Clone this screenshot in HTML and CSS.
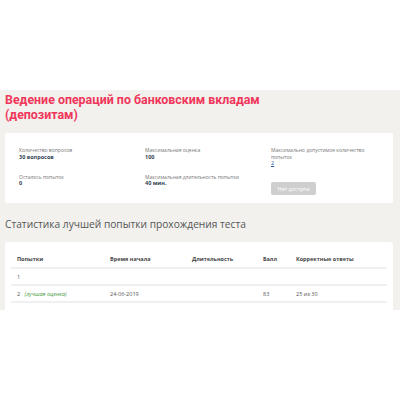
FILE: index.html
```html
<!DOCTYPE html>
<html lang="ru">
<head>
<meta charset="utf-8">
<link rel="stylesheet" href="styles.css">
</head>
<body>
<div class="topbar"></div>
<main class="main">
  <h1 class="title">Ведение операций по банковским вкладам (депозитам)</h1>
  <section class="card info">
    <div class="item"><div class="label">Количество вопросов</div><div class="value">30 вопросов</div></div>
    <div class="item"><div class="label">Максимальная оценка</div><div class="value">100</div></div>
    <div class="item"><div class="label">Максимально допустимое количество попыток</div><div class="value link">2</div></div>
    <div class="item"><div class="label">Осталось попыток</div><div class="value">0</div></div>
    <div class="item"><div class="label">Максимальная длительность попытки</div><div class="value">40 мин.</div></div>
    <div class="item"><span class="btn">Нет доступа</span></div>
  </section>
  <h2 class="subtitle">Статистика лучшей попытки прохождения теста</h2>
  <section class="card stats">
    <table class="table">
      <thead>
        <tr><th class="c1">Попытки</th><th class="c2">Время начала</th><th class="c3">Длительность</th><th class="c4">Балл</th><th>Корректные ответы</th></tr>
      </thead>
      <tbody>
        <tr><td>1</td><td></td><td></td><td></td><td></td></tr>
        <tr><td>2 <span class="best">(лучшая оценка)</span></td><td>24-06-2019</td><td></td><td>83</td><td>25 из 30</td></tr>
      </tbody>
    </table>
  </section>
</main>
</body>
</html>
```
FILE: styles.css
```css
* { box-sizing: border-box; }
html, body { margin: 0; padding: 0; background: #fff; }
body { font-family: "Open Sans", "Liberation Sans", sans-serif; color: #555; }
.topbar { height: 90px; background: #fff; }
.main {
  background: #f2f1ee;
  height: 220px;
  overflow: hidden;
  padding: 1px 7px 0 5px;
}
.title {
  margin: 1px 0 0 0;
  font-family: Roboto, "Open Sans", sans-serif;
  font-size: 12.4px;
  line-height: 15px;
  font-weight: 700;
  color: #f0365a;
  max-width: 280px;
}
.card { background: #fff; border-radius: 2px; }
.info {
  margin-top: 11px;
  height: 70px;
  padding: 14px 14px 0 14px;
  display: grid;
  grid-template-columns: 126px 126px 100px;
  grid-auto-rows: min-content;
  row-gap: 7px;
}
.label { font-size: 5px; line-height: 6.6px; color: #777; }
.value { font-size: 5.5px; line-height: 6.6px; font-weight: 700; color: #2f3f55; }
.value.link { font-weight: 400; color: #2b5a9a; text-decoration: underline; }
.btn {
  display: inline-flex; align-items: center; justify-content: center;
  width: 45px; height: 13px; margin-top: 1px;
  background: #cfcfcf; color: #fff; border-radius: 2px;
  font-size: 5.5px;
}
.subtitle {
  margin: 14px 0 0 0;
  font-size: 10.2px;
  line-height: 14px;
  font-weight: 400;
  color: #555;
}
.stats { margin-top: 11px; height: 100px; padding: 13px 6px 0 6px; }
.table { width: 100%; border-collapse: collapse; font-size: 5.5px; }
.table th { text-align: left; font-weight: 700; color: #444; padding: 0 6px 4px 6px; height: 12px; border-bottom: 2px solid #f0f0f0; }
.table td { padding: 0 6px; height: 17px; border-bottom: 2px solid #f0f0f0; color: #555; }
.c1 { width: 93px; }
.c2 { width: 82px; }
.c3 { width: 71px; }
.c4 { width: 33px; }
.best { font-style: italic; color: #3f9a3a; margin-left: 3px; }
```
